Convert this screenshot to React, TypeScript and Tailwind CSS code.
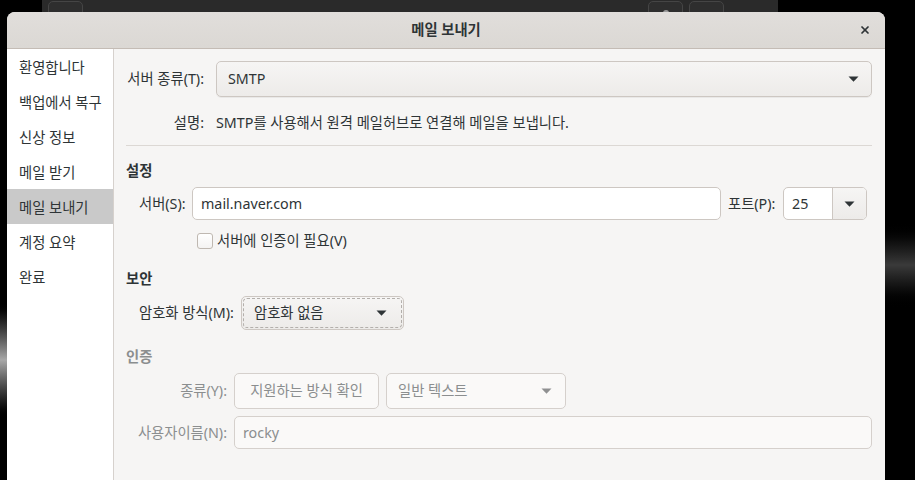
import { X } from "lucide-react";

const sidebarItems = [
  "환영합니다",
  "백업에서 복구",
  "신상 정보",
  "메일 받기",
  "메일 보내기",
  "계정 요약",
  "완료",
];

function Arrow({ className = "" }: { className?: string }) {
  return (
    <svg width="11" height="6" viewBox="0 0 11 6" className={className} aria-hidden="true">
      <path d="M0.5 0.5h10L5.5 5.8z" fill="currentColor" />
    </svg>
  );
}

function BackgroundWindow() {
  return (
    <div className="absolute left-[42px] top-0 h-[30px] w-[736px] bg-[#2a2a2a]">
      <div className="absolute left-[6px] top-[1px] h-[30px] w-[35px] rounded-[5px] border border-[#454545] bg-[#2e2e2e]" />
      <div className="absolute left-[606px] top-[1px] h-[30px] w-[35px] rounded-[5px] border border-[#454545] bg-[#2e2e2e]">
        <div className="mx-auto mt-[8px] h-[6px] w-[6px] rounded-full bg-[#9a9a9a]" />
      </div>
      <div className="absolute left-[647px] top-[1px] h-[30px] w-[35px] rounded-[5px] border border-[#454545] bg-[#2e2e2e]" />
    </div>
  );
}

export default function App() {
  return (
    <div className="relative h-[480px] w-[915px] overflow-hidden bg-black font-['Noto_Sans','Noto_Sans_CJK_KR',sans-serif] text-[14.3px] text-[#2e3436]">
      <BackgroundWindow />
      <div className="absolute left-0 top-[300px] h-[120px] w-[7px] bg-gradient-to-b from-black via-[#a8a8a8] to-black" />
      <div className="absolute left-[885px] top-[220px] h-[90px] w-[30px] bg-gradient-to-b from-black via-[#3a3a3a] to-black" />

      {/* dialog */}
      <div className="absolute left-[7px] top-[12px] flex h-[468px] w-[878px] flex-col overflow-hidden rounded-t-[8px] bg-[#f6f5f4]">
        <header className="relative flex h-[37px] shrink-0 items-center justify-center border-b border-[#c4bcb5] bg-gradient-to-b from-[#e1dedb] to-[#dbd8d4]">
          <span className="font-bold">메일 보내기</span>
          <X className="absolute right-[14px] top-[12px] size-[12px] text-[#2e3436]" strokeWidth={3.4} />
        </header>

        <div className="flex min-h-0 flex-1">
          <nav className="w-[107px] shrink-0 border-r border-[#d6d1cd] bg-white">
            {sidebarItems.map((item) => (
              <div
                key={item}
                className={`flex h-[35px] items-center whitespace-nowrap pl-[12px] pt-[2px] ${
                  item === "메일 보내기" ? "bg-[#c9c9c9]" : ""
                }`}
              >
                {item}
              </div>
            ))}
          </nav>

          <main className="flex flex-1 flex-col pl-[12px] pr-[13px]">
            {/* server type */}
            <div className="mt-[12px] flex h-[36px] items-center">
              <span className="flex w-[78px] justify-end whitespace-nowrap">서버 종류(T):</span>
              <div className="ml-[12px] flex h-full flex-1 items-center justify-between rounded-[5px] border border-[#cdc7c2] bg-gradient-to-b from-[#f6f5f4] to-[#edebe9] pl-[11px] pr-[12px] shadow-[0_1px_0_rgba(0,0,0,0.05)]">
                <span>SMTP</span>
                <Arrow />
              </div>
            </div>

            <div className="mt-[16px] flex h-[20px] items-center">
              <span className="flex w-[78px] justify-end whitespace-nowrap">설명:</span>
              <span className="ml-[12px] whitespace-nowrap">SMTP를 사용해서 원격 메일허브로 연결해 메일을 보냅니다.</span>
            </div>

            <div className="mt-[12px] h-px bg-[#dcd8d4]" />

            {/* settings */}
            <div className="mt-[15px] flex h-[20px] items-center font-bold">설정</div>

            <div className="mt-[6px] flex h-[33px] items-center pl-[13px]">
              <span className="w-[53px] whitespace-nowrap">서버(S):</span>
              <div className="flex h-full flex-1 items-center rounded-[5px] border border-[#cdc7c2] bg-white pl-[8px]">
                mail.naver.com
              </div>
              <span className="ml-[7px] w-[55px] whitespace-nowrap">포트(P):</span>
              <div className="mr-[5px] flex h-full w-[84px] overflow-hidden rounded-[5px] border border-[#cdc7c2] bg-white">
                <span className="flex w-[48px] items-center pl-[8px]">25</span>
                <div className="flex flex-1 items-center justify-center border-l border-[#cdc7c2] bg-gradient-to-b from-[#f6f5f4] to-[#edebe9]">
                  <Arrow />
                </div>
              </div>
            </div>

            <label className="ml-[71px] mt-[13px] flex h-[16px] items-center gap-[4px]">
              <span className="size-[16px] rounded-[3px] border border-[#bfb8b1] bg-gradient-to-b from-white to-[#f4f3f2]" />
              <span className="whitespace-nowrap">서버에 인증이 필요(V)</span>
            </label>

            {/* security */}
            <div className="mt-[20px] flex h-[20px] items-center font-bold">보안</div>

            <div className="mt-[7px] flex h-[34px] items-center pl-[13px]">
              <span className="w-[102px] whitespace-nowrap">암호화 방식(M):</span>
              <div className="h-full w-[163px] rounded-[5px] border border-[#cdc7c2] bg-gradient-to-b from-[#f6f5f4] to-[#edebe9] p-px">
                <div className="flex h-full items-center justify-between rounded-[4px] border border-dashed border-[#b3afab] pl-[10px] pr-[14px]">
                  <span className="whitespace-nowrap">암호화 없음</span>
                  <Arrow />
                </div>
              </div>
            </div>

            {/* authentication (disabled) */}
            <div className="mt-[17px] flex h-[20px] items-center font-bold text-[#8b8e8f]">인증</div>

            <div className="mt-[6px] flex h-[36px] items-center gap-[7px] pl-[13px] text-[#8b8e8f]">
              <span className="flex w-[88px] justify-end whitespace-nowrap">종류(Y):</span>
              <div className="flex h-full w-[145px] items-center justify-center rounded-[5px] border border-[#d5d0cc] bg-[#faf9f8]">
                지원하는 방식 확인
              </div>
              <div className="flex h-full w-[180px] items-center justify-between rounded-[5px] border border-[#d5d0cc] bg-[#faf9f8] pl-[11px] pr-[13px]">
                <span className="whitespace-nowrap">일반 텍스트</span>
                <Arrow className="text-[#8f9091]" />
              </div>
            </div>

            <div className="mt-[7px] flex h-[33px] items-center gap-[7px] pl-[13px] text-[#8b8e8f]">
              <span className="flex w-[88px] justify-end whitespace-nowrap">사용자이름(N):</span>
              <div className="flex h-full flex-1 items-center rounded-[5px] border border-[#d5d0cc] bg-[#faf9f8] pl-[8px]">
                rocky
              </div>
            </div>
          </main>
        </div>
      </div>
    </div>
  );
}
